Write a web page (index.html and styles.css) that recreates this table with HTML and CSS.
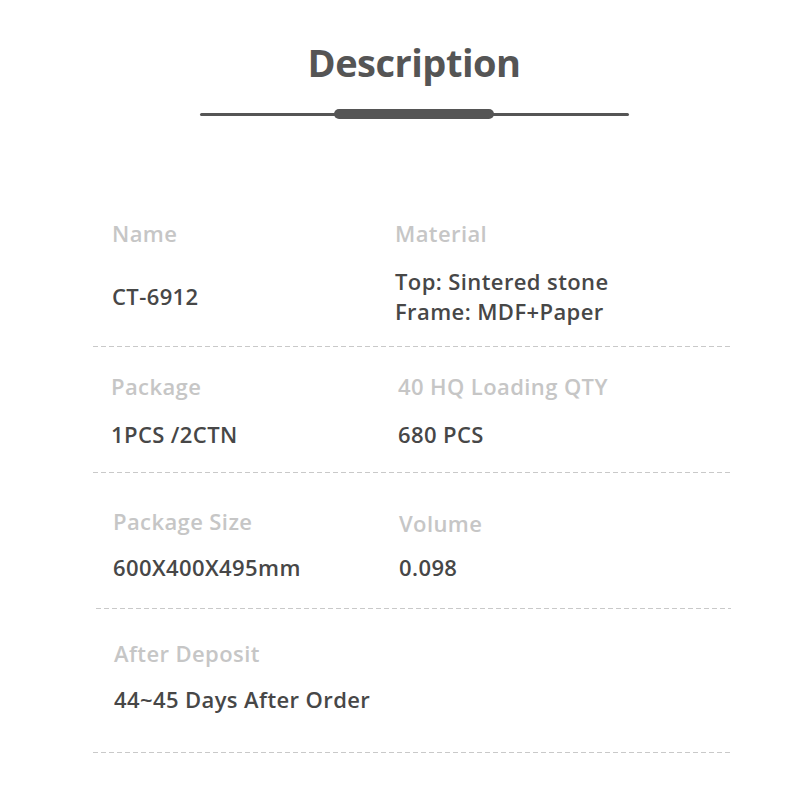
FILE: index.html
```html
<!DOCTYPE html>
<html lang="en">
<head>
<meta charset="utf-8">
<title>Description</title>
<link rel="stylesheet" href="styles.css">
</head>
<body>
<main class="page">
  <header class="head">
    <h1 class="title">Description</h1>
    <div class="divider"><span class="divider-thick"></span></div>
  </header>
  <section class="specs">
    <div class="spec-row row-1">
      <div class="label">Name</div>
      <div class="label">Material</div>
      <div class="value">CT-6912</div>
      <div class="value">Top: Sintered stone<br>Frame: MDF+Paper</div>
    </div>
    <div class="spec-row row-2">
      <div class="label">Package</div>
      <div class="label">40 HQ Loading QTY</div>
      <div class="value">1PCS /2CTN</div>
      <div class="value">680 PCS</div>
    </div>
    <div class="spec-row row-3">
      <div class="label">Package Size</div>
      <div class="label label-low">Volume</div>
      <div class="value">600X400X495mm</div>
      <div class="value">0.098</div>
    </div>
    <div class="spec-row row-4">
      <div class="label">After Deposit</div>
      <div class="label"></div>
      <div class="value value-wide">44~45 Days After Order</div>
    </div>
  </section>
</main>
</body>
</html>
```
FILE: styles.css
```css
* { box-sizing: border-box; }
html, body { margin: 0; padding: 0; background: #ffffff; }
body {
  font-family: "Open Sans", "Noto Sans", sans-serif;
  width: 800px;
  height: 810px;
  overflow: hidden;
}
.head {
  padding-top: 38px;
  padding-left: 28px;
  display: flex;
  flex-direction: column;
  align-items: center;
}
.title {
  margin: 0;
  font-size: 38px;
  line-height: 48px;
  font-weight: 700;
  letter-spacing: -0.5px;
  color: #555555;
}
.divider {
  margin-top: 23px;
  width: 429px;
  height: 10px;
  display: flex;
  align-items: center;
  justify-content: center;
  position: relative;
}
.divider::before {
  content: "";
  position: absolute;
  left: 0;
  right: 0;
  top: 3.5px;
  height: 3px;
  border-radius: 2px;
  background: #555555;
}
.divider-thick {
  position: relative;
  width: 160px;
  height: 10px;
  border-radius: 5px;
  background: #555555;
}
.specs {
  margin-left: 93px;
  width: 638px;
}
.spec-row {
  display: grid;
  grid-template-columns: 283px 1fr;
  grid-template-rows: auto auto;
  align-items: center;
  padding-left: 19px;
  background: repeating-linear-gradient(to right, #c9c9c9 0 5px, transparent 5px 8px) left bottom / 100% 1px no-repeat;
}
.label {
  font-size: 22px;
  line-height: 30px;
  font-weight: 600;
  letter-spacing: 0.4px;
  color: #c6c6c6;
}
.value {
  font-size: 22px;
  line-height: 30px;
  font-weight: 600;
  letter-spacing: 0.4px;
  color: #474747;
}
.value-wide { grid-column: 1 / 3; }
.label-low { align-self: end; line-height: 26px; }

.row-1 { padding-top: 99px; padding-bottom: 21px; }
.row-1 .value { margin-top: 18px; }
.row-2 { padding-top: 24px; padding-bottom: 24px; padding-left: 18px; grid-template-columns: 287px 1fr; }
.row-2 .value { margin-top: 18px; }
.row-3 { padding-top: 33px; padding-bottom: 27px; padding-left: 17px; grid-template-columns: 286px 1fr; margin-left: 3px; }
.row-3 .value { margin-top: 16px; }
.row-4 { padding-top: 29px; padding-bottom: 39px; padding-left: 21px; }
.row-4 .value { margin-top: 16px; }
```
